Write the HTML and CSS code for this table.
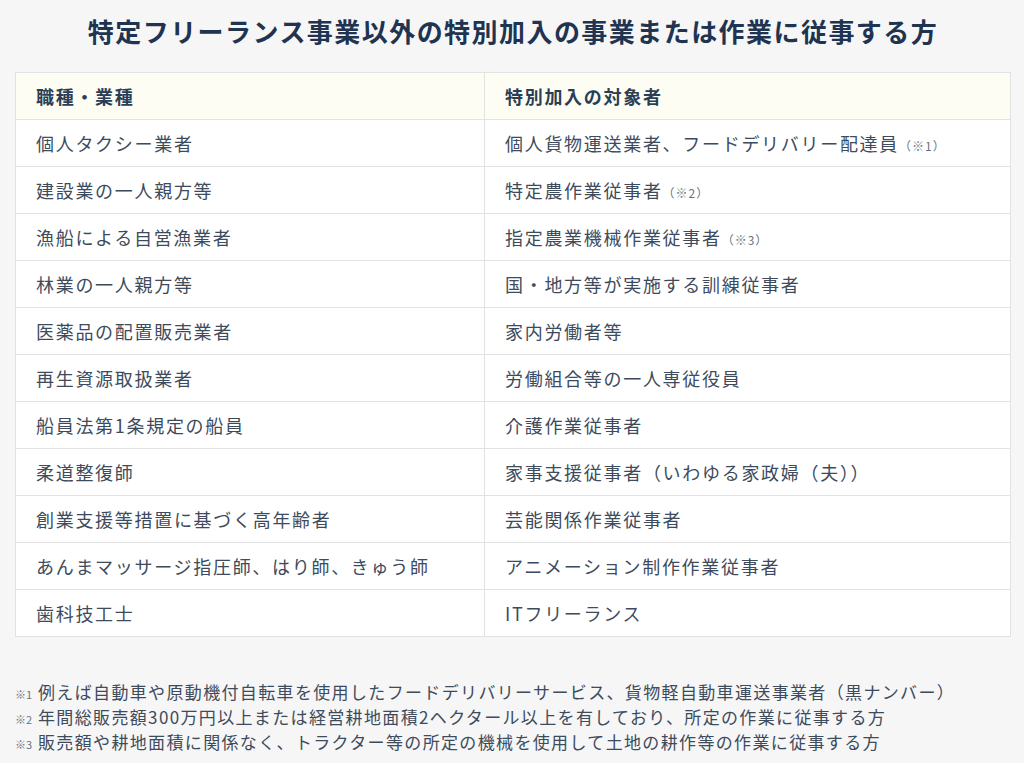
FILE: index.html
```html
<!DOCTYPE html>
<html lang="ja">
<head>
<meta charset="utf-8">
<link rel="stylesheet" href="styles.css">
</head>
<body>
<h1 class="title">特定フリーランス事業以外の特別加入の事業または作業に従事する方</h1>
<table class="tbl">
  <thead>
    <tr><th>職種・業種</th><th>特別加入の対象者</th></tr>
  </thead>
  <tbody>
    <tr><td>個人タクシー業者</td><td>個人貨物運送業者、フードデリバリー配達員<span class="ref">（※1）</span></td></tr>
    <tr><td>建設業の一人親方等</td><td>特定農作業従事者<span class="ref">（※2）</span></td></tr>
    <tr><td>漁船による自営漁業者</td><td>指定農業機械作業従事者<span class="ref">（※3）</span></td></tr>
    <tr><td>林業の一人親方等</td><td>国・地方等が実施する訓練従事者</td></tr>
    <tr><td>医薬品の配置販売業者</td><td>家内労働者等</td></tr>
    <tr><td>再生資源取扱業者</td><td>労働組合等の一人専従役員</td></tr>
    <tr><td>船員法第1条規定の船員</td><td>介護作業従事者</td></tr>
    <tr><td>柔道整復師</td><td>家事支援従事者（いわゆる家政婦（夫））</td></tr>
    <tr><td>創業支援等措置に基づく高年齢者</td><td>芸能関係作業従事者</td></tr>
    <tr><td>あんまマッサージ指圧師、はり師、きゅう師</td><td>アニメーション制作作業従事者</td></tr>
    <tr><td>歯科技工士</td><td>ITフリーランス</td></tr>
  </tbody>
</table>
<div class="notes">
  <p class="note"><span class="mark">※1</span>例えば自動車や原動機付自転車を使用したフードデリバリーサービス、貨物軽自動車運送事業者（黒ナンバー）</p>
  <p class="note"><span class="mark">※2</span>年間総販売額300万円以上または経営耕地面積2ヘクタール以上を有しており、所定の作業に従事する方</p>
  <p class="note"><span class="mark">※3</span>販売額や耕地面積に関係なく、トラクター等の所定の機械を使用して土地の耕作等の作業に従事する方</p>
</div>
</body>
</html>
```
FILE: styles.css
```css
html, body {
  margin: 0;
  padding: 0;
  background: #f6f6f6;
}
body {
  font-family: "Noto Sans CJK JP", "Noto Sans", sans-serif;
  color: #3d4b5c;
  padding: 0 13px 0 15px;
}
.title {
  margin: 0;
  height: 72px;
  line-height: 62px;
  text-align: center;
  font-size: 26px;
  font-weight: 700;
  letter-spacing: 1.45px;
  color: #1e3450;
}
.tbl {
  width: 100%;
  border-collapse: collapse;
  background: #ffffff;
  table-layout: fixed;
}
.tbl th, .tbl td {
  border: 1px solid #e2e2e2;
  height: 46px;
  padding: 0 20px;
  text-align: left;
  font-size: 18px;
  letter-spacing: 1.7px;
  vertical-align: middle;
  white-space: nowrap;
}
.tbl th:first-child, .tbl td:first-child {
  width: 428px;
}
.tbl th {
  background: #fdfdf3;
  font-weight: 700;
  color: #2c3e55;
}
.ref {
  font-size: 12px;
  letter-spacing: 1px;
  color: #6a7480;
}
.notes {
  margin-top: 42px;
}
.note {
  margin: 0;
  height: 25px;
  line-height: 25px;
  font-size: 17px;
  letter-spacing: 1.35px;
  white-space: nowrap;
}
.mark {
  display: inline-block;
  width: 23px;
  line-height: 1;
  font-size: 11px;
  letter-spacing: 0;
  color: #6a7480;
}
```
